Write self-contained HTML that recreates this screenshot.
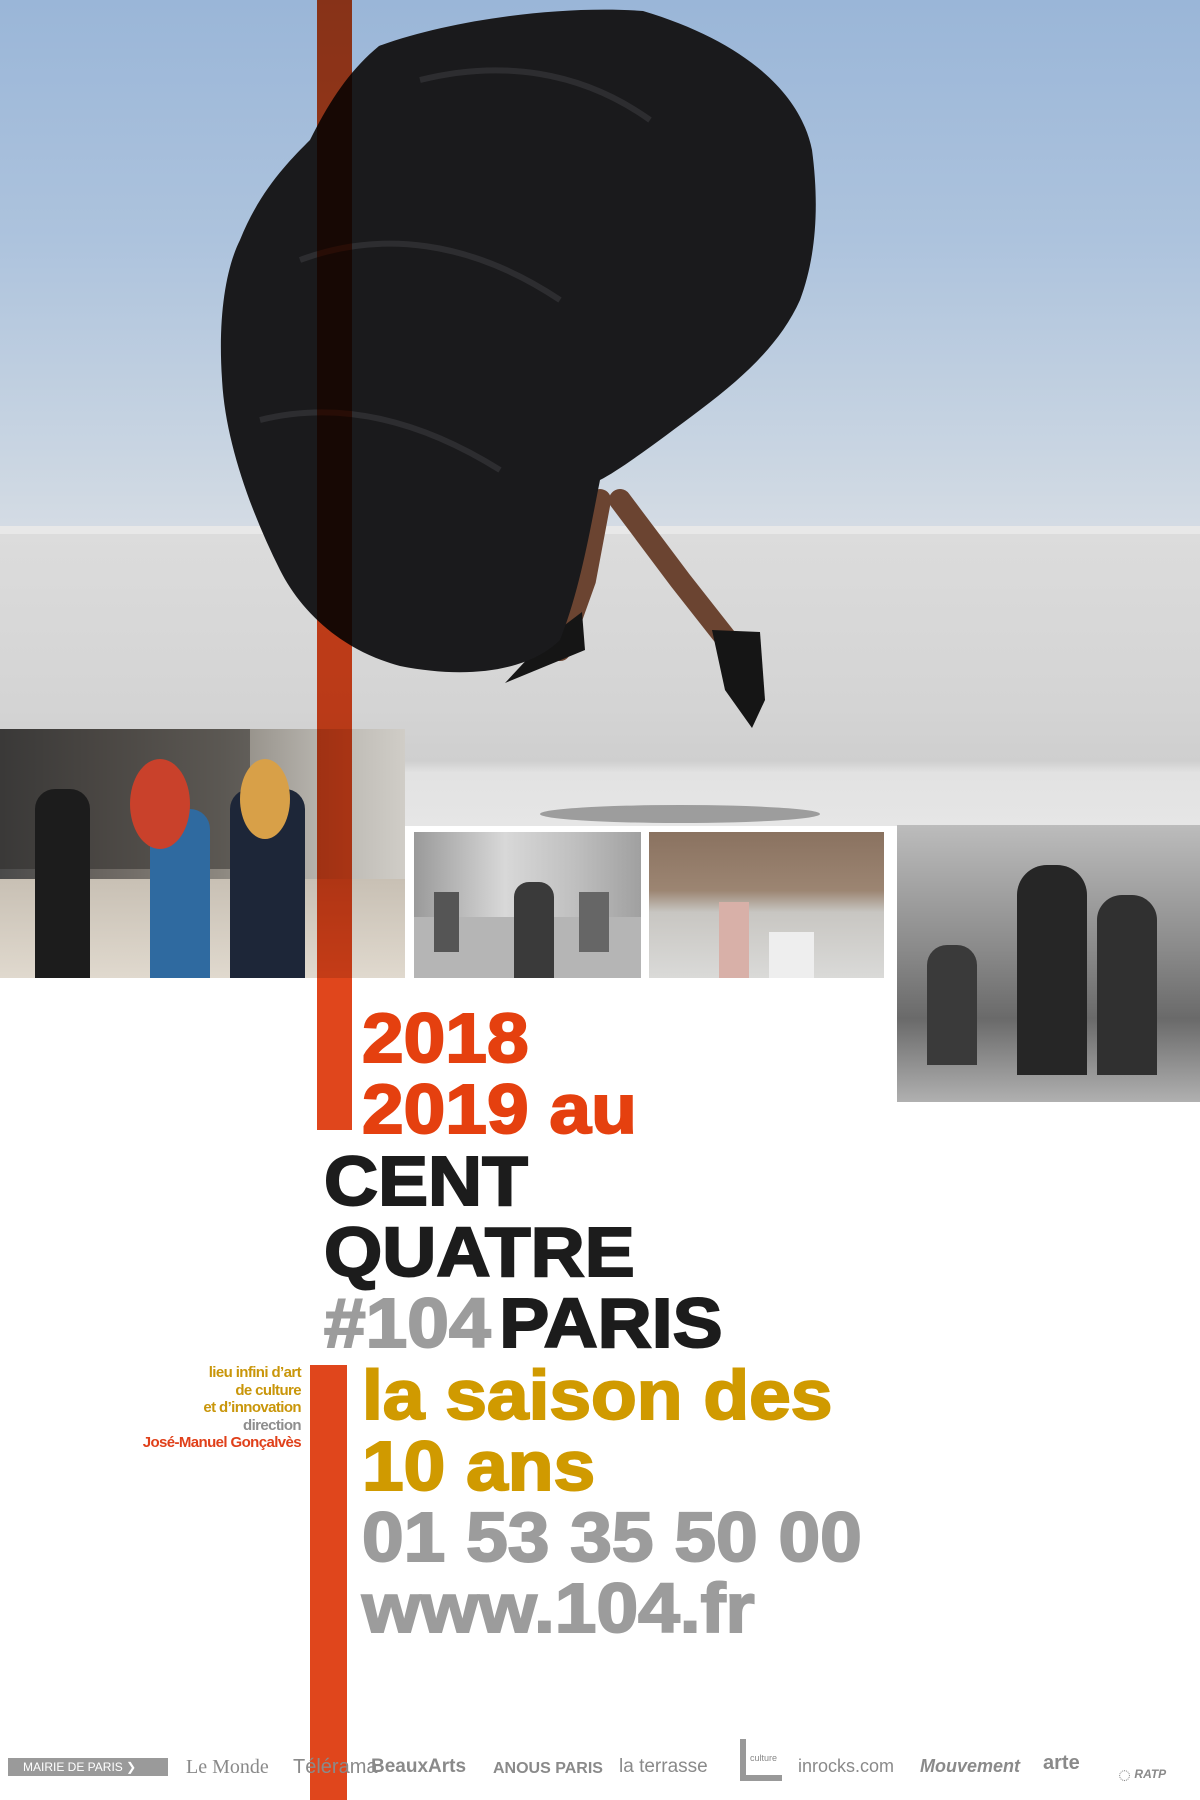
<!DOCTYPE html>
<html><head><meta charset="utf-8">
<style>
*{margin:0;padding:0;box-sizing:border-box}
html,body{width:1200px;height:1800px;overflow:hidden;background:#fff}
body{position:relative;font-family:"Liberation Sans",Arial,sans-serif}
.a{position:absolute}
.big{position:absolute;font-weight:bold;font-size:70px;line-height:1;white-space:nowrap;letter-spacing:0;-webkit-text-stroke:2px currentColor;transform:scaleX(1.07);transform-origin:left top}
.sm{position:absolute;right:899px;text-align:right;font-weight:bold;font-size:15px;line-height:17.5px;letter-spacing:-0.6px;white-space:nowrap}
.logo{position:absolute;top:1756px;color:#8a8a8a;font-size:19px;white-space:nowrap}
</style></head><body>
<div class="a" style="left:0;top:0;width:1200px;height:534px;background:linear-gradient(180deg,#9ab6d8 0%,#adc3dd 45%,#c9d5e2 85%,#d5dce4 100%)"></div>
<div class="a" style="left:0;top:530px;width:1200px;height:296px;background:linear-gradient(180deg,#dcdcdc 0%,#d4d4d4 60%,#cfcfcf 78%,#e2e2e2 82%,#e6e6e6 100%)"></div>
<div class="a" style="left:0;top:526px;width:1200px;height:8px;background:#e8e8e8"></div>
<div class="a" style="left:540px;top:805px;width:280px;height:18px;border-radius:50%;background:#6d6d6d;opacity:.6"></div>
<svg class="a" style="left:0;top:0" width="1200" height="830">
<path d="M600 500 L585 580 L560 650" stroke="#6b4431" stroke-width="22" fill="none" stroke-linecap="round"/>
<path d="M620 500 L680 580 L735 650" stroke="#6b4431" stroke-width="22" fill="none" stroke-linecap="round"/>
<path d="M545 640 L582 612 L585 650 L505 683 Z" fill="#151515"/>
<path d="M712 630 L760 632 L765 700 L752 728 L725 690 Z" fill="#151515"/>
<path d="M379 46 C450 20 560 5 643 11 C740 40 800 90 812 150 C820 210 815 260 800 300 C780 345 740 380 700 410 C660 440 620 470 600 480 C590 530 580 590 560 640 C530 670 470 680 400 666 C340 650 300 610 280 570 C250 510 225 440 222 379 C218 320 225 270 240 240 C260 190 290 160 310 140 C330 100 350 70 379 46 Z" fill="#1a1a1c"/>
<path d="M420 80 C500 60 580 70 650 120 M300 260 C380 230 470 240 560 300 M260 420 C340 400 420 420 500 470" stroke="#3a3a3e" stroke-width="6" fill="none" opacity=".6"/>
</svg>
<div class="a" style="left:0;top:729px;width:405px;height:249px;background:linear-gradient(90deg,#4a4a4a 0%,#6a6560 25%,#8d8880 55%,#b8b5af 80%,#d0cdc7 100%)">
 <div class="a" style="left:0;top:0;width:250px;height:140px;background:#2a2826;opacity:.5"></div>
 <div class="a" style="left:0;top:150px;width:405px;height:99px;background:linear-gradient(180deg,#c8c0b4,#e0d9ce)"></div>
 <div class="a" style="left:35px;top:60px;width:55px;height:189px;background:#1c1c1c;border-radius:20px 20px 0 0"></div>
 <div class="a" style="left:150px;top:80px;width:60px;height:169px;background:#2f6aa0;border-radius:20px 20px 0 0"></div>
 <div class="a" style="left:230px;top:60px;width:75px;height:189px;background:#1d2638;border-radius:20px 20px 0 0"></div>
 <div class="a" style="left:130px;top:30px;width:60px;height:90px;border-radius:50%;background:#c9412b"></div>
 <div class="a" style="left:240px;top:30px;width:50px;height:80px;border-radius:50%;background:#d8a048"></div>
</div>
<div class="a" style="left:414px;top:832px;width:227px;height:146px;background:linear-gradient(90deg,#9a9a9a,#d8d8d8 40%,#c0c0c0 70%,#a0a0a0)">
 <div class="a" style="left:0;top:85px;width:227px;height:61px;background:#b5b5b5"></div>
 <div class="a" style="left:100px;top:50px;width:40px;height:96px;background:#3a3a3a;border-radius:15px 15px 0 0"></div>
 <div class="a" style="left:20px;top:60px;width:25px;height:60px;background:#555"></div>
 <div class="a" style="left:165px;top:60px;width:30px;height:60px;background:#666"></div>
</div>
<div class="a" style="left:649px;top:832px;width:235px;height:146px;background:linear-gradient(180deg,#8a7260 0%,#9c8572 40%,#c8c6c2 55%,#dadad8 100%)">
 <div class="a" style="left:70px;top:70px;width:30px;height:76px;background:#d8b0a8"></div>
 <div class="a" style="left:120px;top:100px;width:45px;height:46px;background:#eee"></div>
</div>
<div class="a" style="left:897px;top:825px;width:303px;height:277px;background:linear-gradient(180deg,#bcbcbc 0%,#8a8a8a 45%,#6a6a6a 70%,#b0b0b0 100%)">
 <div class="a" style="left:120px;top:40px;width:70px;height:210px;background:#262626;border-radius:30px 30px 0 0"></div>
 <div class="a" style="left:200px;top:70px;width:60px;height:180px;background:#303030;border-radius:25px 25px 0 0"></div>
 <div class="a" style="left:30px;top:120px;width:50px;height:120px;background:#3a3a3a;border-radius:20px 20px 0 0"></div>
</div>
<div class="a" style="left:317px;top:0;width:35px;height:1130px;background:#e0461c;mix-blend-mode:multiply"></div>
<div class="a" style="left:310px;top:1365px;width:37px;height:435px;background:#e0461c"></div>
<div class="big" style="left:362px;top:1003px;color:#e5400f">2018</div>
<div class="big" style="left:362px;top:1074px;color:#e5400f">2019 au</div>
<div class="big" style="left:324px;top:1146px;color:#1c1c1c">CENT</div>
<div class="big" style="left:324px;top:1217px;color:#1c1c1c">QUATRE</div>
<div class="big" style="left:324px;top:1288px;color:#9c9c9c">#104<span style="color:#1c1c1c;margin-left:8px">PARIS</span></div>
<div class="big" style="left:362px;top:1360px;color:#d09a00">la saison des</div>
<div class="big" style="left:362px;top:1431px;color:#d09a00">10 ans</div>
<div class="big" style="left:362px;top:1502px;color:#9c9c9c">01 53 35 50 00</div>
<div class="big" style="left:362px;top:1573px;color:#9c9c9c">www.104.fr</div>
<div class="sm" style="top:1364px"><span style="color:#c9960a">lieu infini d’art<br>de culture<br>et d’innovation</span><br><span style="color:#8e8e8e">direction</span><br><span style="color:#e0401a">José-Manuel Gonçalvès</span></div>
<div class="a" style="left:8px;top:1758px;width:160px;height:18px;background:#9a9a9a;color:#fff;font-size:12px;line-height:18px;padding-left:15px">MAIRIE DE PARIS ❯</div>
<div class="logo" style="left:186px;font-family:'Liberation Serif',serif;font-size:20px">Le Monde</div>
<div class="logo" style="left:293px;font-size:20px">Télérama</div>
<div class="logo" style="left:371px;font-weight:bold">BeauxArts</div>
<div class="logo" style="left:493px;font-weight:bold;font-size:16px;top:1760px">ANOUS PARIS</div>
<div class="logo" style="left:619px">la terrasse</div>
<div class="a" style="left:740px;top:1739px;width:42px;height:42px;border-left:6px solid #999;border-bottom:6px solid #999;font-size:9px;color:#888;padding:14px 0 0 4px">culture</div>
<div class="logo" style="left:798px;font-size:18px">inrocks.com</div>
<div class="logo" style="left:920px;font-weight:bold;font-style:italic;font-size:18px">Mouvement</div>
<div class="logo" style="left:1043px;font-weight:bold;font-size:20px;top:1752px">arte</div>
<div class="logo" style="left:1118px;font-size:12px;font-style:italic;font-weight:bold;top:1762px"><span style="font-size:22px;vertical-align:middle">◌</span> RATP</div>
</body></html>
